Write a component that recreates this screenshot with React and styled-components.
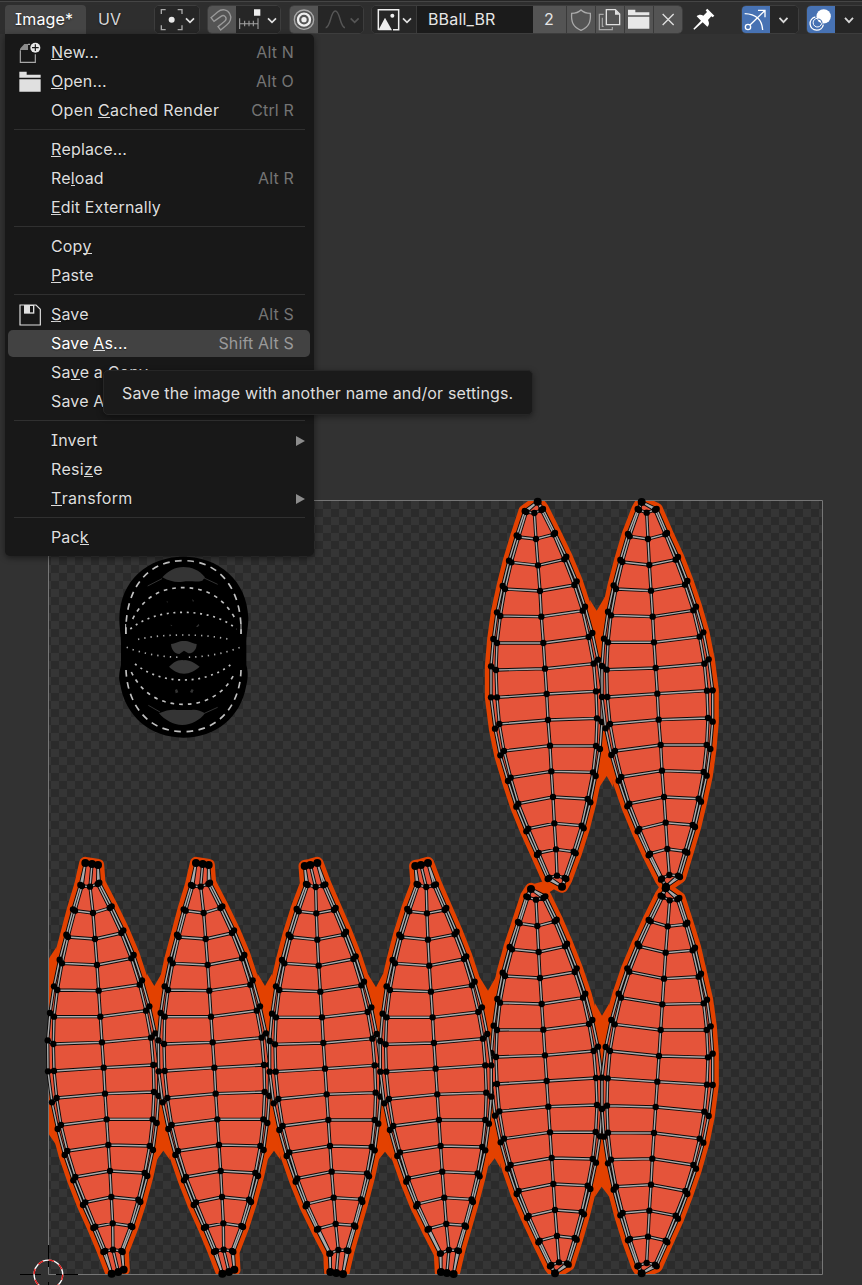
import React from 'react';
import styled, { createGlobalStyle, css } from 'styled-components';

const GlobalStyle = createGlobalStyle`
  html, body { margin: 0; padding: 0; background: #323232; }
  body { overflow: hidden; }
  * { box-sizing: border-box; }
`;

const Editor = styled.main`
  width: 862px;
  height: 1285px;
  display: flex;
  flex-direction: column;
  position: relative;
  overflow: hidden;
  background: #323232;
  color: #e0e0e0;
  font-family: Inter, 'Liberation Sans', sans-serif;
  font-size: 16px;
  letter-spacing: 0.155px;
  line-height: 29px;
  font-feature-settings: 'cv08';
  white-space: nowrap;
`;

const Header = styled.header`
  height: 34px;
  flex: none;
  display: flex;
  align-items: flex-start;
  padding: 5px 0 0 5px;
  background: #2e2e2e;
  box-shadow: inset 0 1px 0 #262626, inset 0 2px 0 #454545;
`;

const MenuTab = styled.div`
  flex: none;
  height: 29px;
  width: ${(p) => p.$w}px;
  padding-left: ${(p) => p.$pad}px;
  line-height: 28px;
  border-radius: 4px 4px 0 0;
  color: ${(p) => (p.$active ? '#ffffff' : '#d8d8d8')};
  background: ${(p) => (p.$active ? '#454545' : 'transparent')};
  text-shadow: 0 1px 2px rgba(0, 0, 0, 0.5);
`;

const Group = styled.div`
  display: flex;
  flex: none;
  height: 28.5px;
  width: ${(p) => p.$w}px;
  margin-left: ${(p) => p.$gap}px;
  border: 1px solid #3d3d3d;
  border-radius: 5px;
  background: #252525;
  overflow: hidden;
`;

const cellTone = {
  dark: css`background: #262626;`,
  on: css`background: #545454;`,
  blue: css`background: #4772b3;`,
  field: css`background: #1b1b1b;`,
};

const Cell = styled.div`
  flex: none;
  width: ${(p) => p.$w}px;
  height: 100%;
  ${(p) => cellTone[p.$tone || 'dark']}
  ${(p) => p.$divider && 'border-right: 1px solid #3a3a3a;'}
  padding-left: ${(p) => p.$pad || 0}px;
  line-height: 26px;
  color: #e6e6e6;
  overflow: hidden;
`;

const Glyph = styled.svg`
  display: block;
  flex: none;
  fill: none;
  stroke: #e0e0e0;
  stroke-width: 4.5;
`;

const Viewport = styled.section`
  flex: 1;
  display: flex;
`;

const Menu = styled.nav`
  position: absolute;
  left: 5px;
  top: 34px;
  width: 309px;
  height: 522px;
  padding: 4px 4px 4px 3px;
  background: #181818;
  border-radius: 0 5px 5px 5px;
  box-shadow: 0 2px 6px rgba(0, 0, 0, 0.45);
`;

const Item = styled.div`
  display: flex;
  align-items: center;
  width: 302px;
  height: 27px;
  margin: 1px 0;
  border-radius: 5px;
  color: ${(p) => (p.$active ? '#ffffff' : '#dedede')};
  background: ${(p) => (p.$active ? '#424242' : 'transparent')};
  & + & { margin-top: 2px; }
`;

const IconSlot = styled.span`
  width: 43px;
  height: 27px;
  padding-left: 10px;
  display: flex;
  align-items: center;
`;

const Label = styled.span`
  flex: 1;
  line-height: 26px;
  height: 27px;
  letter-spacing: ${(p) => (p.$wide ? 0.34 : 0.155)}px;
  text-shadow: 0 1px 1px rgba(0, 0, 0, 0.5);
`;

const Key = styled.u`
  text-decoration: none;
  box-shadow: 0 -1px 0 #dedede inset;
  display: inline-block;
  height: 21px;
  line-height: 26px;
  margin-top: 0;
  vertical-align: top;
`;

const Shortcut = styled.span`
  margin-right: 16px;
  line-height: 26px;
  height: 27px;
  color: ${(p) => (p.$active ? '#9a9a9a' : '#747474')};
`;

const Separator = styled.div`
  height: 1px;
  margin: 5px 5px 6px 6px;
  background: #303030;
`;

const Arrow = styled.span`
  margin-right: 5px;
  border-left: 9px solid #8c8c8c;
  border-top: 5px solid transparent;
  border-bottom: 5px solid transparent;
`;

const Tooltip = styled.div`
  position: absolute;
  left: 103px;
  top: 370px;
  width: 430px;
  height: 45px;
  padding-left: 18px;
  line-height: 44px;
  border: 1px solid #262626;
  border-radius: 5px;
  background: #1a1a1a;
  color: #dedede;
  box-shadow: 0 2px 6px rgba(0, 0, 0, 0.4);
`;

const Chevron = ({ w }) => (
  <Glyph width={w} height="27" viewBox={`0 0 ${w} 27`}>
    <path d={`M${w / 2 - 4} 11.8l4 4.3 4-4.3`} stroke="#d8d8d8" strokeWidth="1.8" />
  </Glyph>
);

const CellIcon = ({ box, w = 28, children }) => (
  <Glyph width={w} height="27" viewBox={box}>{children}</Glyph>
);

const menuItems = [
  ['', 'N', 'ew...', 'Alt N', 'new'],
  ['', 'O', 'pen...', 'Alt O', 'open'],
  ['Open ', 'C', 'ached Render', 'Ctrl R', 'wide'],
  null,
  ['', 'R', 'eplace...'],
  ['Re', 'l', 'oad', 'Alt R'],
  ['', 'E', 'dit Externally'],
  null,
  ['Cop', 'y', ''],
  ['', 'P', 'aste'],
  null,
  ['', 'S', 'ave', 'Alt S', 'save'],
  ['Save ', 'A', 's...', 'Shift Alt S', 'active'],
  ['Sa', 'v', 'e a Copy...'],
  ['Save A', 'l', 'l Images'],
  null,
  ['Invert', '', '', '>'],
  ['Resi', 'z', 'e', '', 'wide'],
  ['', 'T', 'ransform', '>', 'wide'],
  null,
  ['Pac', 'k', ''],
];

const MenuIcon = ({ kind }) => {
  if (kind === 'new')
    return (
      <Glyph width="24" height="24" viewBox="54 124 72 72">
        <path d="M61 152V188H106V164M84 134h6" stroke="#a8a8a8" strokeWidth="3.5" />
        <path d="M60 151V147L73 133H84V151Z" fill="#8c8c8c" stroke="none" />
        <circle cx="106" cy="144" r="15" fill="#e8e8e8" stroke="none" />
        <path d="M106 134v20M96 144h20" stroke="#181818" strokeWidth="3.5" />
      </Glyph>
    );
  if (kind === 'open')
    return (
      <Glyph width="24" height="24" viewBox="54 208 72 72">
        <path d="M58 213H80V222H122V231H58ZM58 236H122V273H58Z" fill="#e0e0e0" stroke="none" />
      </Glyph>
    );
  if (kind === 'save')
    return (
      <Glyph width="24" height="24" viewBox="54 38 72 72">
        <path d="M60 44H108L121 57V104H60Z" strokeWidth="3.5" />
        <path d="M72 44H103V70H72Z" fill="#e0e0e0" stroke="none" />
        <path d="M90 47h9v19h-9z" fill="#181818" stroke="none" />
      </Glyph>
    );
  return null;
};

const Z = (s) => s.trim().split(/\s+/).map((p) => p.split(',').map(Number));

const islands = {
  topLeft: {
    top: Z('173,35'), bottom: Z('246,1190'),
    OL: Z('134,63 110,136 87,212 68,288 51,367 40,447 33,529 33,622 45,716 61,796 84,873 109,950 139,1024 171,1095 203,1167'),
    IL: Z('139,66 116,141 94,217 75,297 61,378 51,459 48,540 51,622 58,702 72,783 92,863 115,941 145,1016 176,1089 208,1163'),
    C: Z('163,69 168,147 174,226 180,303 184,380 190,459 195,536 200,612 204,690 210,767 214,844 219,921 223,1000 228,1078 231,1157'),
    IR: Z('184,60 221,133 253,208 283,285 308,362 326,441 341,521 348,604 351,685 348,768 339,847 323,927 305,1007 281,1085 254,1164'),
    OR: Z('189,57 225,129 259,200 290,274 315,350 337,429 354,509 366,602 366,696 360,777 347,858 331,937 311,1015 287,1090 259,1167'),
  },
  topRight: {
    top: Z('485,36'), bottom: Z('558,1190'),
    OL: Z('473,57 444,132 421,210 401,286 384,365 372,446 366,528 366,621 377,715 394,795 416,872 442,949 473,1024 506,1096 543,1169'),
    IL: Z('477,60 449,139 427,216 408,297 393,376 384,457 380,539 382,621 390,702 405,783 424,861 448,941 478,1017 510,1091 546,1165'),
    C: Z('500,68 504,147 508,225 513,302 518,380 522,457 527,534 532,611 536,689 542,765 546,842 552,921 557,998 562,1077 568,1155'),
    IR: Z('525,60 556,133 587,209 615,284 640,361 659,440 673,521 681,602 684,684 680,765 671,846 656,926 638,1005 615,1084 594,1157'),
    OR: Z('530,57 561,129 594,201 622,273 648,350 670,427 686,508 698,601 698,695 691,777 680,857 663,935 645,1011 622,1088 600,1161'),
  },
  lowLeft: {
    top: Z('153,57'), bottom: Z('225,1210'),
    OL: Z('139,79 114,156 89,231 68,308 52,387 41,467 34,549 34,643 45,737 62,817 84,896 110,972 141,1044 175,1117 210,1189'),
    IL: Z('144,82 119,160 96,238 75,318 60,398 51,480 48,561 51,642 58,724 72,806 92,885 116,963 146,1038 179,1112 214,1185'),
    C: Z('168,89 172,168 176,246 180,324 185,402 190,479 195,556 200,633 205,710 210,787 215,864 220,942 225,1020 231,1098 237,1177'),
    IR: Z('190,84 224,154 255,229 284,306 309,383 327,462 341,543 348,624 351,705 347,786 338,867 323,947 305,1026 284,1104 261,1180'),
    OR: Z('196,79 230,149 261,221 290,295 316,371 337,450 354,530 366,624 366,717 360,799 348,878 331,957 312,1033 290,1109 266,1184'),
  },
  lowRight: {
    top: Z('557,55'), bottom: Z('485,1210'),
    OL: Z('542,77 506,150 473,221 442,295 416,371 394,450 377,531 366,623 366,717 372,800 384,880 401,959 421,1036 444,1111 472,1189'),
    IL: Z('548,80 512,154 478,229 448,305 423,383 404,463 390,543 383,625 381,707 384,788 393,869 408,950 428,1029 450,1107 476,1186'),
    C: Z('569,91 563,169 557,248 552,326 547,403 542,480 537,558 532,635 527,711 522,789 517,866 513,944 508,1022 504,1100 500,1179'),
    IR: Z('592,88 617,163 638,241 656,320 671,400 680,480 684,562 681,644 673,725 659,806 640,885 616,963 587,1037 557,1112 525,1184'),
    OR: Z('598,84 622,158 645,233 663,311 681,389 692,469 698,551 698,645 686,738 670,818 648,896 622,972 594,1046 562,1117 530,1189'),
  },
  stripA: {
    top: Z('136,39 156,42 174,45'), bottom: Z('215,1271 235,1266 251,1259'),
    OL: Z('121,105 99,178 79,254 59,329 42,409 30,489 23,571 24,664 36,757 53,837 74,915 100,991 129,1065 160,1134 190,1206'),
    IL: Z('126,108 105,182 84,261 66,340 52,420 42,500 40,582 42,663 50,744 63,825 82,903 106,981 136,1057 166,1130 196,1203'),
    C: Z('150,110 159,189 165,267 171,345 176,422 181,500 186,577 191,653 195,731 200,808 205,885 210,963 214,1041 218,1120 219,1199'),
    IR: Z('173,102 209,174 244,249 274,325 299,404 318,482 333,563 340,645 342,726 338,808 329,888 314,969 295,1049 272,1128 244,1203'),
    OR: Z('178,98 215,169 250,241 281,315 306,391 328,469 346,550 357,644 356,738 350,819 339,900 322,978 301,1056 277,1131 248,1206'),
  },
  stripB: {
    top: Z('104,48 121,45 142,39'), bottom: Z('181,1266 199,1269 219,1272'),
    OL: Z('108,102 80,177 56,254 36,330 18,409 6,491 -1,573 -1,665 11,760 28,840 50,918 77,995 107,1069 141,1139 178,1211'),
    IL: Z('113,105 86,184 62,261 43,340 28,420 18,502 15,583 17,665 25,747 38,828 58,907 82,985 111,1062 145,1136 181,1210'),
    C: Z('137,111 139,190 142,269 146,347 151,425 156,502 160,579 165,656 170,733 175,810 180,888 185,965 191,1043 197,1122 205,1200'),
    IR: Z('160,106 192,180 222,253 250,327 274,406 293,486 307,566 314,646 317,728 314,810 305,891 291,970 273,1048 252,1126 230,1201'),
    OR: Z('166,103 197,174 228,245 257,319 282,395 304,472 320,552 332,646 332,740 325,821 314,901 297,979 277,1056 256,1130 235,1203'),
  },
};

const placed = [
  ['topLeft', 480, 490],
  ['topRight', 480, 490],
  ['lowLeft', 480, 870],
  ['lowRight', 480, 870],
  ['stripA', 40, 850],
  ['stripA', 150.67, 850],
  ['stripB', 270, 850],
  ['stripB', 380.6, 850],
];

const bridges = [
  [480, 490, '350,362 330,330 337,440 372,440 375,320'],
  [480, 490, '380,858 357,893 355,780 388,770 400,893'],
  [480, 490, '185,1175 150,1185 150,1195 200,1212 222,1198 246,1190'],
  [480, 870, '366,437 345,400 345,530 380,530 388,400'],
  [480, 870, '365,950 345,980 355,800 375,800 388,980'],
  [480, 870, '24,362 -2,320 5,480 40,460 48,320'],
  [480, 870, '44,865 25,890 25,750 50,750 62,895'],
  [40, 850, '343,408 320,370 330,480 357,480 365,370'],
  [40, 850, '370,902 350,930 352,800 372,800 390,930'],
  [40, 850, '675,408 652,370 662,480 689,480 697,370'],
  [40, 850, '702,902 682,930 684,800 704,800 722,930'],
  [270, 850, '318,412 292,370 305,490 335,490 340,370'],
  [270, 850, '345,905 325,930 330,800 345,800 365,930'],
  [40, 850, '20,335 50,290 40,450 20,450'],
  [40, 850, '20,840 28,855 48,884 30,740'],
];

const line = (pts) => 'M' + pts.map((p) => p.join(' ')).join('L');

const outline = (d) => line([...d.top, ...d.OR, ...[...d.bottom].reverse(), ...[...d.OL].reverse()]) + 'Z';

const wires = (d) => {
  const t = d.top;
  const b = d.bottom;
  const out = ['OL', 'IL', 'IR', 'OR'].map((k) => {
    const right = k.endsWith('R');
    return line([right ? t[t.length - 1] : t[0], ...d[k], right ? b[b.length - 1] : b[0]]);
  });
  out.push(line(t.length > 1 ? [t[1], ...d.C, b[1]] : d.C));
  if (t.length > 1) out.push(line(t), line(b));
  d.C.forEach((c, i) => out.push(line([d.OL[i], d.IL[i], c, d.IR[i], d.OR[i]])));
  return out.join('');
};

const at = (x, y) => `translate(${x} ${y}) scale(${1 / 3})`;

const Island = ({ name, x, y }) => {
  const d = islands[name];
  const w = wires(d);
  return (
    <g transform={at(x, y)} strokeLinejoin="round">
      <path d={outline(d)} fill="#e5543a" />
      <path d={w} fill="none" stroke="#0a0a0a" strokeWidth="10" />
      <path d={w} fill="none" stroke="#ababab" strokeWidth="4.3" />
      {['OL', 'IL', 'C', 'IR', 'OR'].flatMap((k) => d[k].map(([cx, cy], i) => <circle key={k + i} cx={cx} cy={cy} r="9.5" />))}
      {[...d.top, ...d.bottom].map(([cx, cy], i) => <circle key={i} cx={cx} cy={cy} r="12" />)}
    </g>
  );
};

const Cluster = () => (
  <g transform={at(110, 550)} fill="none" stroke="#c0c0c0" strokeWidth="5">
    <path d="M28 205C30 90 115 20 220 20S412 90 415 205C415 235 408 255 409 285V345C416 370 413 390 408 410C392 500 318 563 220 563S45 500 30 400C24 380 30 360 33 345V280C33 255 28 235 28 205Z" fill="#000" stroke="none" />
    <g stroke="none">
      <path d="M157 82C175 62 195 51 220 51S268 60 285 82L277 92C260 97 240 92 218 95C200 98 180 95 157 82Z" fill="#343434" />
      <path d="M183 282C200 280 205 273 222 273S245 280 260 282C260 300 248 311 235 310L222 302L208 312C195 312 184 300 183 282Z" fill="#373737" />
      <path d="M177 350C190 338 200 328 222 330S252 338 269 350C255 362 240 371 222 371S190 362 177 350Z" fill="#373737" />
      <path d="M147 490C170 480 185 478 200 480H245C260 478 270 482 285 490C270 510 245 525 217 525S165 510 147 490Z" fill="#343434" />
      <path d="M195 420l6-3 4 10-8 3zM240 426l5-9 6 3-4 9zM170 152l4 4-3 2zM246 147l6 5-3 4zM258 230l8-8 2 4-5 5zM181 224l6 2-3 3z" fill="#343434" />
    </g>
    <g strokeDasharray="20 16.4">
      <path d="M48 252C44 125 105 32 220 32S397 125 393 252" />
      <path d="M48 360C52 460 110 545 220 545S391 460 393 360" />
    </g>
    <g strokeDasharray="11 15">
      <path d="M68 207C100 144 150 113 220 113S342 144 376 207" />
      <path d="M64 366C95 430 150 463 220 463S345 430 376 366" />
    </g>
    <g strokeDasharray="6 14">
      <path d="M61 237C105 202 160 187 220 187S338 202 380 237" />
      <path d="M75 342C115 373 165 390 220 390S325 373 365 342" />
    </g>
    <g strokeDasharray="4 15" stroke="#aaa">
      <path d="M84 268C130 258 175 255 220 255S310 258 358 268" />
      <path d="M50 292C100 312 160 322 220 322S340 312 390 292" />
    </g>
    <path d="M113 108l43-22M323 103l-43-20M115 466l35 20M323 472l-40 18" stroke="#333" strokeWidth="3" />
    <path d="M47 222v30M393 220v32" strokeWidth="3" />
    <circle cx="221" cy="321" r="10" fill="#000" stroke="none" />
  </g>
);

const UVCanvas = () => (
  <svg width="862" height="1251" viewBox="0 34 862 1251" style={{ display: 'block' }}>
    <defs>
      <pattern id="checker" x="3" y="5" width="16" height="16" patternUnits="userSpaceOnUse">
        <path d="M0 0H16V16H0Z" fill="#353535" />
        <path d="M0 0H8V8H0ZM8 8H16V16H8Z" fill="#2b2b2b" />
      </pattern>
      <clipPath id="bounds"><path d="M49 501H822V1274H49Z" /></clipPath>
    </defs>
    <path d="M0 34H862V1285H0Z" fill="#323232" />
    <path d="M49 501H822V1274H49Z" fill="url(#checker)" shapeRendering="crispEdges" />
    <g clipPath="url(#bounds)" fill="#e34100">
      {placed.map(([n, x, y], i) => (
        <path key={i} transform={at(x, y)} d={outline(islands[n])} stroke="#e34100" strokeWidth="37" strokeLinejoin="round" />
      ))}
      {bridges.map(([x, y, p], i) => <polygon key={i} transform={at(x, y)} points={p} />)}
    </g>
    <path d="M48.5 500.5H822.5V1274.5H48.5Z" fill="none" stroke="#767676" />
    <Cluster />
    {placed.map(([n, x, y], i) => <Island key={i} name={n} x={x} y={y} />)}
    <g fill="none">
      <path d="M20 1274.5H41M56 1274.5H78M48.5 1245V1267M48.5 1282V1285" stroke="#000" />
      <circle cx="48.4" cy="1274.4" r="14.3" stroke="#fff" strokeWidth="1.4" />
      <circle cx="48.4" cy="1274.4" r="14.3" stroke="#e01818" strokeWidth="1.4" strokeDasharray="5.6 5.6" />
    </g>
  </svg>
);

export default function App() {
  return (
    <Editor>
      <GlobalStyle />
      <Header>
        <MenuTab $w={81} $pad={10} $active>Image*</MenuTab>
        <MenuTab $w={60} $pad={12}>UV</MenuTab>
        <Group $w={46} $gap={8}>
          <Cell $w={44}>
            <CellIcon w={44} box="466 19 132 81">
              <path d="M485 43V30H498M534 30H547V43M547 77V90H534M498 90H485V77" stroke="#aaa" strokeWidth="4" />
              <circle cx="516" cy="60" r="9" fill="#e8e8e8" stroke="none" />
              <path d="M559 56l12 12 12-12" strokeWidth="5" />
            </CellIcon>
          </Cell>
        </Group>
        <Group $w={74} $gap={7}>
          <Cell $w={28} $tone="on">
            <CellIcon box="174 19 84 81">
              <path d="M183 54L203 37C216 26 232 29 239 42C246 54 241 68 230 76L212 91L204 81L224 65C234 56 224 43 213 50L192 65Z" stroke="#9a9a9a" strokeWidth="4" />
            </CellIcon>
          </Cell>
          <Cell $w={45}>
            <CellIcon w={44} box="259 19 132 81">
              <path d="M270 56V88M285 63V80M298 63V80M311 63V80M325 56V88M270 72H325" stroke="#a4a4a4" strokeWidth="3.2" />
              <path d="M313 29h19v19h-19z" fill="#eee" stroke="none" />
              <path d="M355 56l12 12 12-12" strokeWidth="5" />
            </CellIcon>
          </Cell>
        </Group>
        <Group $w={75} $gap={8}>
          <Cell $w={28} $tone="on">
            <CellIcon box="417 19 84 81">
              <circle cx="459" cy="60" r="29" stroke="#aaa" strokeWidth="4" />
              <circle cx="459" cy="60" r="18" stroke="#eee" strokeWidth="7" />
              <circle cx="459" cy="60" r="8" fill="#eee" stroke="none" />
            </CellIcon>
          </Cell>
          <Cell $w={46}>
            <CellIcon w={46} box="503 19 138 81">
              <path d="M526 84C542 82 540 34 555 34S568 82 584 84" stroke="#555" />
              <path d="M601 56l12 12 12-12" stroke="#555" strokeWidth="5" />
            </CellIcon>
          </Cell>
        </Group>
        <Group $w={312} $gap={7}>
          <Cell $w={45} $divider>
            <CellIcon w={45} box="667 19 135 81">
              <path d="M730 90H747V30H686V91" strokeWidth="4.5" stroke="#eee" />
              <path d="M686 92L706 54L727 92Z" fill="#eee" stroke="none" />
              <circle cx="728" cy="48" r="6" fill="#eee" stroke="none" />
              <path d="M760 56l12 12 12-12" strokeWidth="5" />
            </CellIcon>
          </Cell>
          <Cell $w={116} $tone="field" $pad={11}>BBall_BR</Cell>
          <Cell $w={34} $tone="on" $divider $pad={11}>2</Cell>
          <Cell $w={29} $tone="on" $divider>
            <CellIcon box="112 19 84 81">
              <path d="M154 31C146 39 137 41 126 41C124 66 130 82 154 92C178 82 184 66 182 41C171 41 162 39 154 31Z" stroke="#aaa" strokeWidth="4" />
            </CellIcon>
          </Cell>
          <Cell $w={29} $tone="on" $divider>
            <CellIcon box="199 19 84 81">
              <path d="M230 30H257L270 43V75H230Z" strokeWidth="4" />
              <path d="M256 30V45H271Z" fill="#e0e0e0" stroke="none" />
              <path d="M222 44H209V90H248V82M218 54V80H222" stroke="#a8a8a8" strokeWidth="3.5" />
            </CellIcon>
          </Cell>
          <Cell $w={29} $tone="on" $divider>
            <CellIcon box="286 19 84 81">
              <path d="M295 30H317V38H359V47H295ZM295 51H359V87H295Z" fill="#e8e8e8" stroke="none" />
            </CellIcon>
          </Cell>
          <Cell $w={28} $tone="on">
            <CellIcon box="373 19 84 81">
              <path d="M399 43L432 76M432 43L399 76" strokeWidth="4" />
            </CellIcon>
          </Cell>
        </Group>
        <Glyph width="30" height="28" viewBox="478 17 90 84" style={{ marginLeft: 6 }}>
          <path d="M533 28L554 49L549 54L545 51L535 62C540 72 538 78 533 82L519 69L494 91L491 88L514 64L501 51C506 46 514 45 521 49L532 38L528 33Z" fill="#fff" stroke="none" />
        </Glyph>
        <Group $w={58} $gap={22}>
          <Cell $w={27.5} $tone="blue">
            <CellIcon w={27.5} box="635 19 82.5 81">
              <path d="M643 42C675 43 695 60 697 91M659 76L703 33M683 32H704V53" stroke="#fff" strokeWidth="4" />
              <circle cx="653" cy="82" r="8" stroke="#fff" strokeWidth="4" fill="#4772b3" />
            </CellIcon>
          </Cell>
          <Cell $w={29}><Chevron w={27} /></Cell>
        </Group>
        <Group $w={60} $gap={7}>
          <Cell $w={27.5} $tone="blue">
            <CellIcon w={27.5} box="830 19 82.5 81">
              <circle cx="880" cy="50" r="21.5" fill="#fff" stroke="none" />
              <path d="M855 52A20 20 0 1 0 879 75" stroke="#fff" strokeWidth="4" />
              <path d="M862 56A13 13 0 1 0 874 66" stroke="#fff" strokeWidth="3" />
              <path d="M862 58C870 58 874 62 875 70" stroke="#4772b3" strokeWidth="3.5" />
            </CellIcon>
          </Cell>
          <Cell $w={30}><Chevron w={28} /></Cell>
        </Group>
      </Header>
      <Viewport><UVCanvas /></Viewport>
      <Menu>
        {menuItems.map((m, i) => {
          if (!m) return <Separator key={i} />;
          const [a, k, b, sc, kind] = m;
          const active = kind === 'active';
          return (
            <Item key={i} $active={active}>
              <IconSlot><MenuIcon kind={kind} /></IconSlot>
              <Label $wide={kind === 'wide'}>{a}{k && <Key>{k}</Key>}{b}</Label>
              {sc === '>' ? <Arrow /> : sc && <Shortcut $active={active}>{sc}</Shortcut>}
            </Item>
          );
        })}
      </Menu>
      <Tooltip>Save the image with another name and/or settings.</Tooltip>
    </Editor>
  );
}
